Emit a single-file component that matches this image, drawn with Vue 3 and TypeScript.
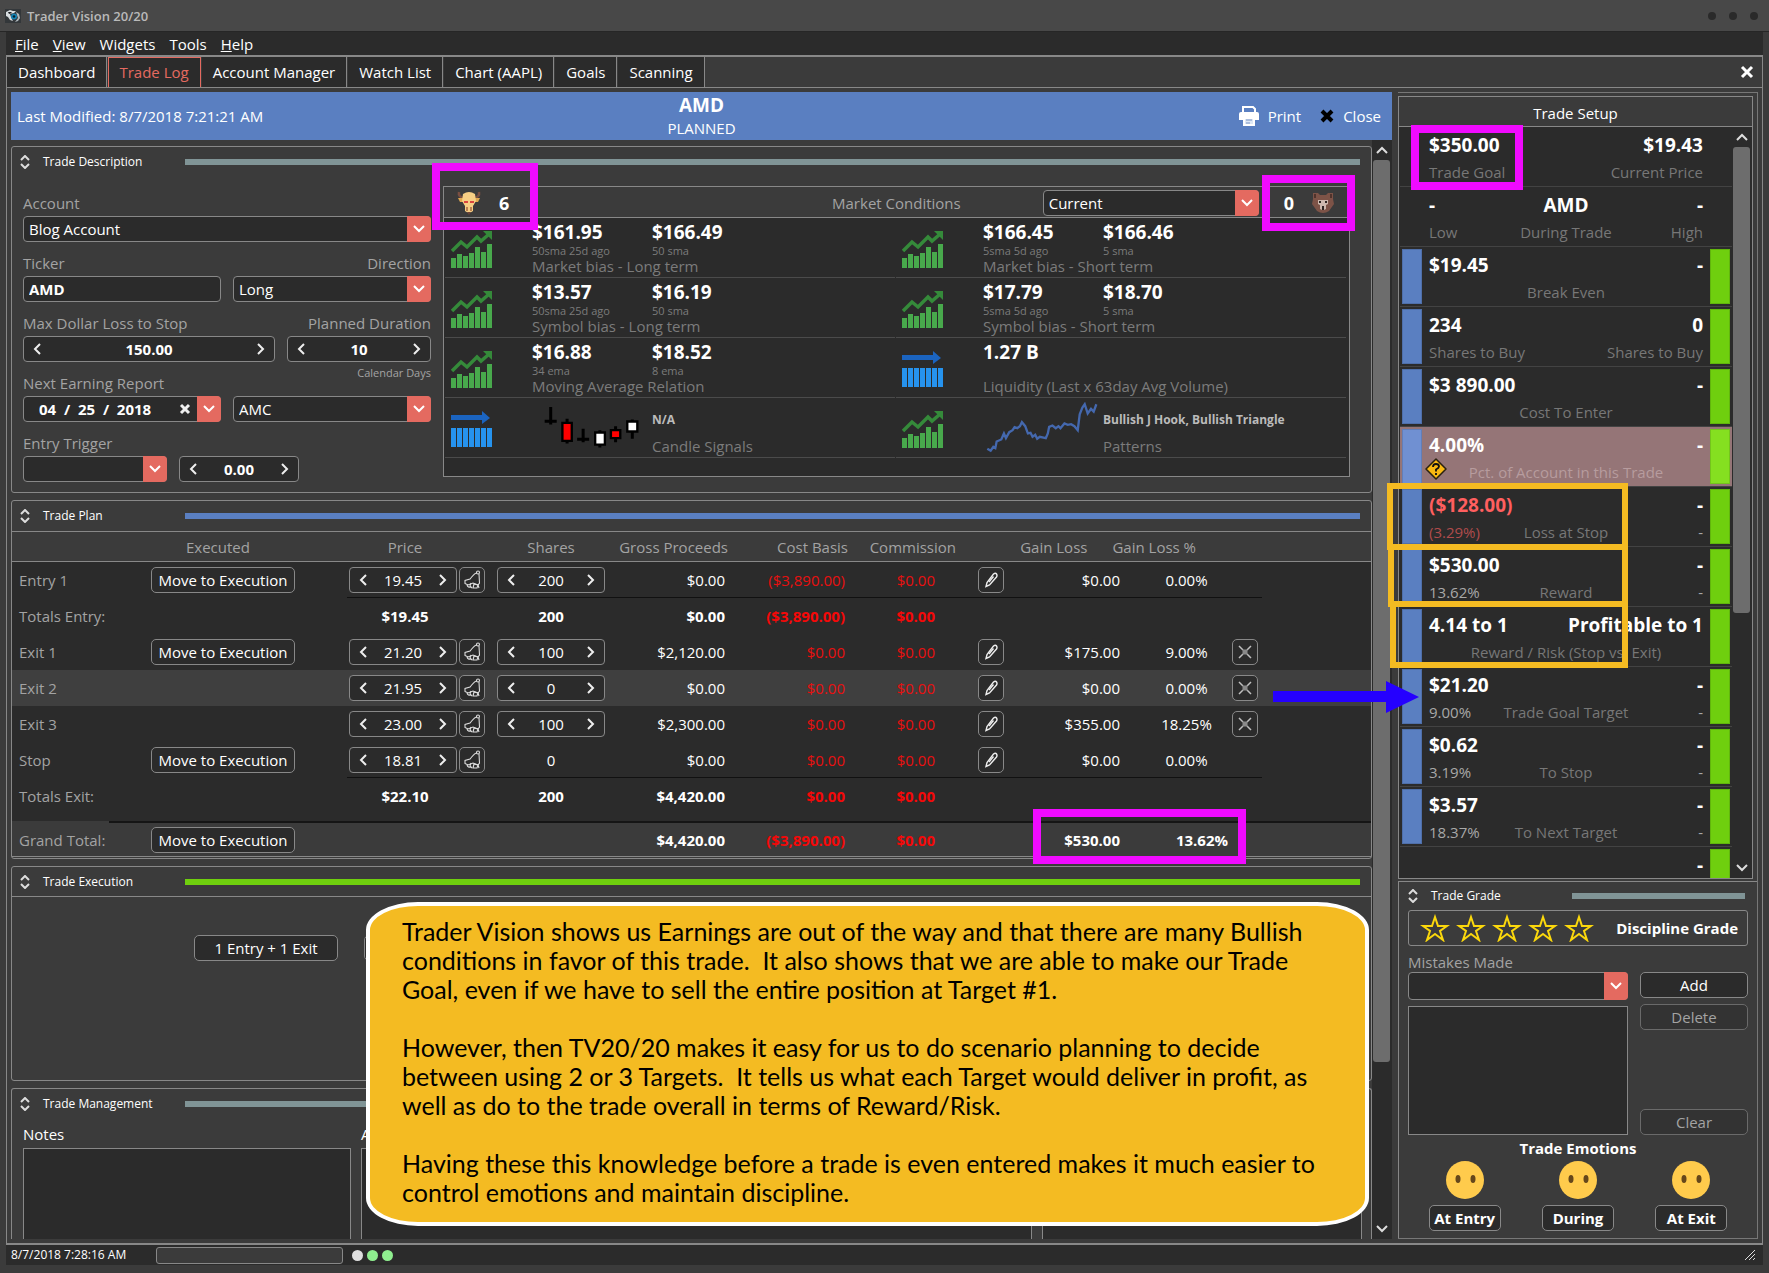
<script setup lang="ts">
interface Menu { hot: string; rest: string }
interface Condition {
  icon: 'up' | 'flat'
  v1: string
  s1: string
  v2: string
  s2: string
  label: string
  art?: 'candles' | 'pattern'
}
interface PlanRow {
  name: string
  kind: 'line' | 'total'
  move: boolean
  price: string
  shares: string
  sharesEdit: boolean
  gross: string
  cost: string
  fee: string
  gain: string
  pct: string
  removable: boolean
  shaded?: boolean
  ruled?: boolean
}
interface SetupRow {
  left: string
  right: string
  mid?: string
  subLeft?: string
  subMid?: string
  subRight?: string
  plain?: boolean
  dim?: boolean
  warn?: boolean
  loss?: boolean
  last?: boolean
}

const menus: Menu[] = [
  { hot: 'F', rest: 'ile' },
  { hot: 'V', rest: 'iew' },
  { hot: '', rest: 'Widgets' },
  { hot: '', rest: 'Tools' },
  { hot: 'H', rest: 'elp' },
]
const tabs = ['Dashboard', 'Trade Log', 'Account Manager', 'Watch List', 'Chart (AAPL)', 'Goals', 'Scanning']

const conditions: Condition[] = [
  { icon: 'up', v1: '$161.95', s1: '50sma 25d ago', v2: '$166.49', s2: '50 sma', label: 'Market bias - Long term' },
  { icon: 'up', v1: '$166.45', s1: '5sma 5d ago', v2: '$166.46', s2: '5 sma', label: 'Market bias - Short term' },
  { icon: 'up', v1: '$13.57', s1: '50sma 25d ago', v2: '$16.19', s2: '50 sma', label: 'Symbol bias - Long term' },
  { icon: 'up', v1: '$17.79', s1: '5sma 5d ago', v2: '$18.70', s2: '5 sma', label: 'Symbol bias - Short term' },
  { icon: 'up', v1: '$16.88', s1: '34 ema', v2: '$18.52', s2: '8 ema', label: 'Moving Average Relation' },
  { icon: 'flat', v1: '1.27 B', s1: '', v2: '', s2: '', label: 'Liquidity (Last x 63day Avg Volume)' },
  { icon: 'flat', v1: 'N/A', s1: '', v2: '', s2: '', label: 'Candle Signals', art: 'candles' },
  { icon: 'up', v1: 'Bullish J Hook, Bullish Triangle', s1: '', v2: '', s2: '', label: 'Patterns', art: 'pattern' },
]
const barHeights = [10, 14, 12, 15, 21, 16, 24]

const plan: PlanRow[] = [
  { name: 'Entry 1', kind: 'line', move: true, price: '19.45', shares: '200', sharesEdit: true, gross: '$0.00', cost: '($3,890.00)', fee: '$0.00', gain: '$0.00', pct: '0.00%', removable: false, ruled: true },
  { name: 'Totals Entry:', kind: 'total', move: false, price: '$19.45', shares: '200', sharesEdit: false, gross: '$0.00', cost: '($3,890.00)', fee: '$0.00', gain: '', pct: '', removable: false },
  { name: 'Exit 1', kind: 'line', move: true, price: '21.20', shares: '100', sharesEdit: true, gross: '$2,120.00', cost: '$0.00', fee: '$0.00', gain: '$175.00', pct: '9.00%', removable: true },
  { name: 'Exit 2', kind: 'line', move: false, price: '21.95', shares: '0', sharesEdit: true, gross: '$0.00', cost: '$0.00', fee: '$0.00', gain: '$0.00', pct: '0.00%', removable: true, shaded: true },
  { name: 'Exit 3', kind: 'line', move: false, price: '23.00', shares: '100', sharesEdit: true, gross: '$2,300.00', cost: '$0.00', fee: '$0.00', gain: '$355.00', pct: '18.25%', removable: true },
  { name: 'Stop', kind: 'line', move: true, price: '18.81', shares: '0', sharesEdit: false, gross: '$0.00', cost: '$0.00', fee: '$0.00', gain: '$0.00', pct: '0.00%', removable: false, ruled: true },
  { name: 'Totals Exit:', kind: 'total', move: false, price: '$22.10', shares: '200', sharesEdit: false, gross: '$4,420.00', cost: '$0.00', fee: '$0.00', gain: '', pct: '', removable: false },
]

const setup: SetupRow[] = [
  { left: '$350.00', right: '$19.43', subLeft: 'Trade Goal', subRight: 'Current Price', plain: true, dim: true },
  { left: '-', mid: 'AMD', right: '-', subLeft: 'Low', subMid: 'During Trade', subRight: 'High', plain: true, dim: true },
  { left: '$19.45', right: '-', subMid: 'Break Even' },
  { left: '234', right: '0', subLeft: 'Shares to Buy', subRight: 'Shares to Buy', dim: true },
  { left: '$3 890.00', right: '-', subMid: 'Cost To Enter' },
  { left: '4.00%', right: '-', subMid: 'Pct. of Account in this Trade', warn: true },
  { left: '($128.00)', right: '-', subLeft: '(3.29%)', subMid: 'Loss at Stop', subRight: '-', loss: true },
  { left: '$530.00', right: '-', subLeft: '13.62%', subMid: 'Reward', subRight: '-' },
  { left: '4.14 to 1', right: 'Profitable to 1', subMid: 'Reward / Risk (Stop vs. Exit)' },
  { left: '$21.20', right: '-', subLeft: '9.00%', subMid: 'Trade Goal Target', subRight: '-' },
  { left: '$0.62', right: '-', subLeft: '3.19%', subMid: 'To Stop', subRight: '-' },
  { left: '$3.57', right: '-', subLeft: '18.37%', subMid: 'To Next Target', subRight: '-' },
  { left: '', right: '-', last: true },
]
const emotions = ['At Entry', 'During', 'At Exit']

const noteLines = `Trader Vision shows us Earnings are out of the way and that there are many Bullish
conditions in favor of this trade.  It also shows that we are able to make our Trade
Goal, even if we have to sell the entire position at Target #1.

However, then TV20/20 makes it easy for us to do scenario planning to decide
between using 2 or 3 Targets.  It tells us what each Target would deliver in profit, as
well as do to the trade overall in terms of Reward/Risk.

Having these this knowledge before a trade is even entered makes it much easier to
control emotions and maintain discipline.`
</script>

<template>
  <div class="window">
    <header class="titlebar">
      <svg class="app-icon" width="16" height="14" viewBox="0 0 16 14">
        <rect width="16" height="14" fill="#33373a" />
        <path d="M1 3l4-2 3 1 3 0-2 2-4 1 1 3 2 4-3-1-2-3-2-1z" fill="#d8dde0" />
        <path d="M11 3l3 2 1 4-2 3-3 1 3-4z" fill="#aeb7bc" />
        <path d="M3 3l3 0 1 1-3 1z" fill="#1c1f22" />
        <circle cx="9" cy="7.500" r="3" fill="#1583b5" />
        <circle cx="9" cy="7.500" r="1.300" fill="#06212f" />
      </svg>
      <span class="app-name">Trader Vision 20/20</span>
      <span class="win-dots"><i></i><i></i><i></i></span>
    </header>

    <div class="body">
      <nav class="menubar">
        <a v-for="m in menus" :key="m.rest" href="#"><u>{{ m.hot }}</u>{{ m.rest }}</a>
      </nav>

      <div class="tabs">
        <button v-for="t in tabs" :key="t" class="tab" :class="{ active: t === 'Trade Log' }">{{ t }}</button>
        <button class="tabs-close" aria-label="Close tab">
          <svg width="14" height="14" viewBox="0 0 14 14"><path d="M2 2l10 10M12 2L2 12" stroke="#fff" stroke-width="3" /></svg>
        </button>
      </div>

      <div class="workspace">
        <main class="left">
          <div class="trade-head">
            <span class="modified">Last Modified: 8/7/2018 7:21:21 AM</span>
            <div class="trade-title">
              <strong>AMD</strong>
              <span>PLANNED</span>
            </div>
            <div class="trade-tools">
              <button>
                <svg width="20" height="20" viewBox="0 0 20 20">
                  <path d="M4 6V1h10l2 2v3" fill="none" stroke="#fff" stroke-width="2" />
                  <path d="M2 6h16q2 0 2 2v6h-4v-3H4v3H0V8q0-2 2-2z" fill="#fff" />
                  <path d="M5 12h10v7H5z" fill="#dfe8f5" stroke="#fff" stroke-width="2" />
                  <path d="M7 14h6M7 17h4" stroke="#7894c4" />
                </svg>
                Print
              </button>
              <button>
                <svg width="14" height="14" viewBox="0 0 14 14"><path d="M2 2l10 10M12 2L2 12" stroke="#000" stroke-width="4" /></svg>
                Close
              </button>
            </div>
          </div>

          <div class="scroller">
            <div class="panels">
              <section class="panel description">
                <div class="panel-head">
                  <svg class="updown" width="10" height="14" viewBox="0 0 10 14"><path d="M1 5l4-4 4 4M1 9l4 4 4-4" /></svg>
                  <h2>Trade Description</h2>
                  <i class="rule steel"></i>
                </div>
                <div class="desc-body">
                  <form class="fields">
                    <div class="field full">
                      <label for="account">Account</label>
                      <div class="select"><select id="account"><option>Blog Account</option></select><span class="drop"><svg width="12" height="8" viewBox="0 0 12 8"><path d="M1 1l5 5 5-5" /></svg></span></div>
                    </div>
                    <div class="pair">
                      <div class="field half">
                        <label for="ticker">Ticker</label>
                        <input id="ticker" class="text" value="AMD" />
                      </div>
                      <div class="field half end">
                        <label for="direction">Direction</label>
                        <div class="select"><select id="direction"><option>Long</option></select><span class="drop"><svg width="12" height="8" viewBox="0 0 12 8"><path d="M1 1l5 5 5-5" /></svg></span></div>
                      </div>
                    </div>
                    <div class="pair">
                      <div class="field wide">
                        <label for="maxloss">Max Dollar Loss to Stop</label>
                        <div class="spin strong">
                          <button type="button" aria-label="Less"><svg width="8" height="12" viewBox="0 0 8 12"><path d="M7 1L2 6l5 5" /></svg></button>
                          <input id="maxloss" value="150.00" />
                          <button type="button" aria-label="More"><svg width="8" height="12" viewBox="0 0 8 12"><path d="M1 1l5 5-5 5" /></svg></button>
                        </div>
                      </div>
                      <div class="field narrow end">
                        <label for="duration">Planned Duration</label>
                        <div class="spin strong">
                          <button type="button" aria-label="Less"><svg width="8" height="12" viewBox="0 0 8 12"><path d="M7 1L2 6l5 5" /></svg></button>
                          <input id="duration" value="10" />
                          <button type="button" aria-label="More"><svg width="8" height="12" viewBox="0 0 8 12"><path d="M1 1l5 5-5 5" /></svg></button>
                        </div>
                        <small>Calendar Days</small>
                      </div>
                    </div>
                    <div class="pair">
                      <div class="field half">
                        <label for="earning">Next Earning Report</label>
                        <div class="select date">
                          <input id="earning" value="04  /  25  /  2018" />
                          <svg class="clear" width="12" height="12" viewBox="0 0 12 12"><path d="M2 2l8 8M10 2l-8 8" /></svg>
                          <span class="drop"><svg width="12" height="8" viewBox="0 0 12 8"><path d="M1 1l5 5 5-5" /></svg></span>
                        </div>
                      </div>
                      <div class="field half push">
                        <div class="select"><select id="session" aria-label="Report session"><option>AMC</option></select><span class="drop"><svg width="12" height="8" viewBox="0 0 12 8"><path d="M1 1l5 5 5-5" /></svg></span></div>
                      </div>
                    </div>
                    <div class="pair bottom-pair">
                      <div class="field trigger">
                        <label for="trigger">Entry Trigger</label>
                        <div class="select"><select id="trigger"><option></option></select><span class="drop"><svg width="12" height="8" viewBox="0 0 12 8"><path d="M1 1l5 5 5-5" /></svg></span></div>
                      </div>
                      <div class="field amount push">
                        <div class="spin strong">
                          <button type="button" aria-label="Less"><svg width="8" height="12" viewBox="0 0 8 12"><path d="M7 1L2 6l5 5" /></svg></button>
                          <input aria-label="Trigger amount" value="0.00" />
                          <button type="button" aria-label="More"><svg width="8" height="12" viewBox="0 0 8 12"><path d="M1 1l5 5-5 5" /></svg></button>
                        </div>
                      </div>
                    </div>
                  </form>

                  <div class="market">
                    <div class="market-head">
                      <svg class="bull" width="24" height="24" viewBox="0 0 24 24">
                        <path d="M2 1Q1 6 7 7M22 1q1 5-5 6" fill="none" stroke="#7a4f42" stroke-width="2.500" />
                        <path d="M1 7l6 0-1 4-3 0zM23 7l-6 0 1 4 3 0z" fill="#e0a850" />
                        <path d="M6 3q6-4 12 0l1 7-3 5v5q-4 3-8 0v-5l-3-5z" fill="#f6ce84" />
                        <path d="M7 10h4v2H7zM13 10h4v2h-4z" fill="#d9453f" />
                        <path d="M10 16v4M14 16v4" stroke="#a8683f" stroke-width="1.500" />
                        <path d="M10 21l2 3 2-3z" fill="#6d4338" />
                      </svg>
                      <strong>6</strong>
                      <label for="conditions">Market Conditions</label>
                      <div class="select short"><select id="conditions"><option>Current</option></select><span class="drop"><svg width="12" height="8" viewBox="0 0 12 8"><path d="M1 1l5 5 5-5" /></svg></span></div>
                      <strong class="zero">0</strong>
                      <svg class="bear" width="22" height="20" viewBox="0 0 22 20">
                        <path d="M1 0h5l2 2h6l2-2h5v6l1 5-5 7q-6 4-12 0l-5-7 1-5z" fill="#7d5347" />
                        <path d="M2 1h2v4H2zM18 1h2v4h-2z" fill="#50332c" />
                        <path d="M6 7h10v4l-2 1v4l-2 1h-2l-2-1v-4l-2-1z" fill="#cdb8ae" />
                        <path d="M7 8h2v2H7zM13 8h2v2h-2zM10 13h2v4h-2z" fill="#2e2522" />
                      </svg>
                    </div>
                    <div class="market-grid">
                      <div v-for="c in conditions" :key="c.label" class="cond" :class="[{ arty: c.art }, c.art]">
                        <svg v-if="c.icon === 'up'" class="trend" width="41" height="37" viewBox="0 0 41 37">
                          <rect v-for="(h, i) in barHeights" :key="i" :x="i * 6" :y="37 - h" width="5" :height="h" fill="#48a94c" />
                          <path d="M1 20l9-9 6 5L26 6l4 4 7-6" fill="none" stroke="#358a3a" stroke-width="3.500" />
                          <path d="M32 0h9v9z" fill="#358a3a" />
                        </svg>
                        <svg v-else class="trend" width="41" height="37" viewBox="0 0 41 37">
                          <rect v-for="i in 7" :key="i" :x="i * 6 - 6" y="17" width="5" height="19" fill="#2693ee" />
                          <path d="M0 4h31V0l8 7-8 6V9H0z" fill="#1b64c0" />
                        </svg>
                        <svg v-if="c.art === 'candles'" class="art" width="97" height="43" viewBox="340 740 290 128">
                          <path d="M363 743v52M345 785h36M460 808v40M442 839h36M412 778v74M510 812v52M557 800v48M607 780v58" stroke="#000" stroke-width="9" />
                          <path d="M398 790h28v54h-28zM543 812h28v24h-28z" fill="#f00" stroke="#000" stroke-width="7" />
                          <path d="M496 819h29v36h-29zM592 786h30v30h-30z" fill="#fff" stroke="#000" stroke-width="7" />
                        </svg>
                        <svg v-if="c.art === 'pattern'" class="art" width="113" height="51" viewBox="320 728 340 152">
                          <polyline fill="none" stroke="#4468ae" stroke-width="7" points="324,868 334,874 342,862 348,866 352,846 366,840 374,822 380,836 390,818 400,812 406,803 414,806 422,800 428,788 438,800 446,822 454,820 460,832 468,826 474,838 482,832 500,836 506,822 510,802 520,798 530,806 538,800 544,806 556,792 566,796 576,794 586,800 596,812 602,764 610,744 617,734 626,762 636,748 644,756 652,734" />
                        </svg>
                        <div class="cond-text">
                          <div class="cond-row">
                            <b>{{ c.v1 }}</b><b>{{ c.v2 }}</b>
                          </div>
                          <div class="cond-row sub">
                            <span>{{ c.s1 }}</span><span>{{ c.s2 }}</span>
                          </div>
                          <div class="cond-label">{{ c.label }}</div>
                        </div>
                      </div>
                    </div>
                    <i class="mark pink mark-bull"></i>
                    <i class="mark pink mark-bear"></i>
                  </div>
                </div>
              </section>

              <section class="panel plan">
                <div class="panel-head">
                  <svg class="updown" width="10" height="14" viewBox="0 0 10 14"><path d="M1 5l4-4 4 4M1 9l4 4 4-4" /></svg>
                  <h2>Trade Plan</h2>
                  <i class="rule blue"></i>
                </div>
                <table>
                  <colgroup>
                    <col class="w1" /><col class="w2" /><col class="w3" /><col class="w4" /><col class="w5" /><col class="w6" />
                    <col class="w7" /><col class="w8" /><col class="w9" /><col class="w10" /><col class="w11" /><col />
                  </colgroup>
                  <thead>
                    <tr>
                      <th></th>
                      <th class="h-exec">Executed</th>
                      <th class="c3">Price</th>
                      <th class="c4">Shares</th>
                      <th class="money">Gross Proceeds</th>
                      <th class="money">Cost Basis</th>
                      <th class="h-fee">Commission</th>
                      <th></th>
                      <th colspan="2" class="h-gain"><span>Gain Loss</span><span>Gain Loss %</span></th>
                      <th></th>
                      <th></th>
                    </tr>
                  </thead>
                  <tbody>
                    <tr v-for="r in plan" :key="r.name" :class="[r.kind, { shaded: r.shaded, ruled: r.ruled }]">
                      <td class="c1">{{ r.name }}</td>
                      <td class="c2"><button v-if="r.move" class="btn">Move to Execution</button></td>
                      <td class="c3" :class="{ edit: r.kind === 'line' }">
                        <div v-if="r.kind === 'line'" class="price-cell">
                          <div class="spin">
                            <button aria-label="Less"><svg width="8" height="12" viewBox="0 0 8 12"><path d="M7 1L2 6l5 5" /></svg></button>
                            <input :aria-label="r.name + ' price'" :value="r.price" />
                            <button aria-label="More"><svg width="8" height="12" viewBox="0 0 8 12"><path d="M1 1l5 5-5 5" /></svg></button>
                          </div>
                          <button class="icon-btn" aria-label="Alert">
                            <svg width="18" height="20" viewBox="0 0 18 20" fill="none" stroke="#ddd" stroke-width="1.100">
                              <circle cx="15" cy="2.500" r="1.500" />
                              <path d="M14 3c-3 0-5 4-7 6l-5 1.500 0 3 3 1.500 5-2 5 2 1.500-2L16 4" />
                              <path d="M4 15q1 3 4 2M8 13l-1 3 2 2M11 14l-1 4h4l1-3zM15 15l1 3" />
                            </svg>
                          </button>
                        </div>
                        <template v-else>{{ r.price }}</template>
                      </td>
                      <td class="c4">
                        <div v-if="r.sharesEdit" class="spin">
                          <button aria-label="Less"><svg width="8" height="12" viewBox="0 0 8 12"><path d="M7 1L2 6l5 5" /></svg></button>
                          <input :aria-label="r.name + ' shares'" :value="r.shares" />
                          <button aria-label="More"><svg width="8" height="12" viewBox="0 0 8 12"><path d="M1 1l5 5-5 5" /></svg></button>
                        </div>
                        <template v-else>{{ r.shares }}</template>
                      </td>
                      <td class="money">{{ r.gross }}</td>
                      <td class="money red">{{ r.cost }}</td>
                      <td class="fee red">{{ r.fee }}</td>
                      <td class="c8">
                        <button v-if="r.kind === 'line'" class="icon-btn" aria-label="Edit">
                          <svg width="14" height="16" viewBox="0 0 14 16" fill="none" stroke="#eee" stroke-width="1.400">
                            <path d="M9.500 2q2-1.500 3 0t0 3L5.500 13l-3.500 1.500L3 10.500z" /><path d="M9.500 4.500L5 10" />
                          </svg>
                        </button>
                      </td>
                      <td class="money">{{ r.gain }}</td>
                      <td class="pct">{{ r.pct }}</td>
                      <td class="c11">
                        <button v-if="r.removable" class="icon-btn" aria-label="Remove">
                          <svg width="14" height="14" viewBox="0 0 14 14" stroke="#c0c0c0" stroke-width="1.500">
                            <path d="M1 1l4 4M13 1L9 5M1 13l4-4M13 13L9 9" /><path d="M4.500 4.500h5v5h-5z" fill="#8a8a8a" stroke="none" />
                          </svg>
                        </button>
                      </td>
                      <td class="tail"></td>
                    </tr>
                  </tbody>
                  <tfoot>
                    <tr class="total">
                      <td class="c1">Grand Total:</td>
                      <td class="c2"><button class="btn">Move to Execution</button></td>
                      <td></td>
                      <td></td>
                      <td class="money">$4,420.00</td>
                      <td class="money red">($3,890.00)</td>
                      <td class="fee red">$0.00</td>
                      <td></td>
                      <td class="money">$530.00</td>
                      <td class="pct-end">13.62%</td>
                      <td></td>
                      <td></td>
                    </tr>
                  </tfoot>
                </table>
                <i class="mark pink mark-total"></i>
              </section>

              <section class="panel execution">
                <div class="panel-head lined">
                  <svg class="updown" width="10" height="14" viewBox="0 0 10 14"><path d="M1 5l4-4 4 4M1 9l4 4 4-4" /></svg>
                  <h2>Trade Execution</h2>
                  <i class="rule green"></i>
                </div>
                <div class="exec-body">
                  <button class="btn">1 Entry + 1 Exit</button>
                  <button class="btn" aria-label="More exits"></button>
                </div>
              </section>

              <section class="panel management">
                <div class="panel-head">
                  <svg class="updown" width="10" height="14" viewBox="0 0 10 14"><path d="M1 5l4-4 4 4M1 9l4 4 4-4" /></svg>
                  <h2>Trade Management</h2>
                  <i class="rule steel"></i>
                </div>
                <div class="notes">
                  <div><label for="notes">Notes</label><textarea id="notes"></textarea></div>
                  <div><label for="actions">A</label><textarea id="actions"></textarea></div>
                  <div><label for="review">&nbsp;</label><textarea id="review"></textarea></div>
                </div>
              </section>
            </div>

            <div class="scrollbar">
              <svg width="12" height="8" viewBox="0 0 12 8"><path d="M1 7l5-5 5 5" /></svg>
              <i class="thumb tall"></i>
              <svg class="down" width="12" height="8" viewBox="0 0 12 8"><path d="M1 1l5 5 5-5" /></svg>
            </div>
          </div>

          <aside class="callout">{{ noteLines }}</aside>
        </main>

        <aside class="right">
          <section class="setup">
            <h3>Trade Setup</h3>
            <div class="setup-body">
              <div class="setup-list">
                <div v-for="(s, i) in setup" :key="i" class="srow" :class="{ warn: s.warn, loss: s.loss, last: s.last }">
                  <i class="edge blue" :class="{ off: s.plain || s.last }"></i>
                  <div class="scell">
                    <div class="sline top"><b>{{ s.left }}</b><b>{{ s.mid }}</b><b>{{ s.right }}</b></div>
                    <div v-if="!s.last" class="sline" :class="{ dim: s.dim }">
                      <span>{{ s.subLeft }}</span><em>{{ s.subMid }}</em><span>{{ s.subRight }}</span>
                    </div>
                    <svg v-if="s.warn" class="sign" width="22" height="22" viewBox="0 0 22 22">
                      <path d="M11 1l10 10-10 10L1 11z" fill="#f9b812" stroke="#2a2210" stroke-width="1.500" stroke-linejoin="round" />
                      <path d="M8 9q0-3 3-3t3 2.500q0 1.500-3 3v2M11 15v2" fill="none" stroke="#111" stroke-width="1.800" />
                    </svg>
                  </div>
                  <i class="edge green" :class="{ off: s.plain }"></i>
                </div>
              </div>
              <div class="scrollbar">
                <svg width="12" height="8" viewBox="0 0 12 8"><path d="M1 7l5-5 5 5" /></svg>
                <i class="thumb mid"></i>
                <svg class="down" width="12" height="8" viewBox="0 0 12 8"><path d="M1 1l5 5 5-5" /></svg>
              </div>
            </div>
          </section>

          <section class="grade">
            <div class="panel-head">
              <svg class="updown" width="10" height="14" viewBox="0 0 10 14"><path d="M1 5l4-4 4 4M1 9l4 4 4-4" /></svg>
              <h2>Trade Grade</h2>
              <i class="rule steel"></i>
            </div>
            <div class="stars">
              <svg v-for="i in 5" :key="i" width="30" height="28" viewBox="0 0 30 28">
                <path d="M15 3l3 9h9l-7 5 3 9-8-6-8 6 3-9-7-5h9z" fill="none" stroke="#fbd80c" stroke-width="2" />
              </svg>
              <strong>Discipline Grade</strong>
            </div>
            <label for="mistakes">Mistakes Made</label>
            <div class="mistakes">
              <div class="mcol">
                <div class="select tallsel"><select id="mistakes"><option></option></select><span class="drop"><svg width="12" height="8" viewBox="0 0 12 8"><path d="M1 1l5 5 5-5" /></svg></span></div>
                <textarea aria-label="Mistake list"></textarea>
              </div>
              <div class="mbtns">
                <button class="btn">Add</button>
                <button class="btn" disabled>Delete</button>
                <button class="btn bottom" disabled>Clear</button>
              </div>
            </div>
            <h4>Trade Emotions</h4>
            <div class="emotions">
              <div v-for="e in emotions" :key="e">
                <svg width="38" height="38" viewBox="0 0 38 38">
                  <circle cx="19" cy="19" r="19" fill="#ffcb4c" />
                  <ellipse cx="12" cy="18" rx="2.500" ry="4" fill="#65471b" />
                  <ellipse cx="27" cy="18" rx="2.500" ry="4" fill="#65471b" />
                </svg>
                <button class="btn">{{ e }}</button>
              </div>
            </div>
          </section>

          <i class="mark pink mark-goal"></i>
          <i class="mark gold mark-loss"></i>
          <i class="mark gold mark-reward"></i>
          <i class="mark gold mark-ratio"></i>
          <svg class="pointer" width="146" height="34" viewBox="0 0 146 34">
            <path d="M0 11h113V1l33 16-33 16V22H0z" fill="#2500ff" />
          </svg>
        </aside>
      </div>

      <footer class="status">
        <span class="clock">8/7/2018 7:28:16 AM</span>
        <span class="progress"></span>
        <i class="led"></i><i class="led on"></i><i class="led on"></i>
        <svg class="grip" width="10" height="10" viewBox="0 0 10 10"><path d="M0 10L10 0M4 10l6-6M8 10l2-2" stroke="#ddd" /></svg>
      </footer>
    </div>
  </div>
</template>

<style>
html,
body {
  margin: 0;
  background: #3b3b3b;
}
</style>

<style scoped>
.window,
.window * {
  box-sizing: border-box;
}
.window {
  display: flex;
  flex-direction: column;
  min-height: 100vh;
  background: #3b3b3b;
  color: #fff;
  font: 15px/20px "Open Sans", "Noto Sans", sans-serif;
  overflow: hidden;
}
button,
input,
select,
textarea {
  font: inherit;
  color: inherit;
  margin: 0;
  padding: 0;
}
button {
  border: 0;
  background: none;
  white-space: nowrap;
}
svg {
  display: block;
  flex: none;
}
h2,
h3,
h4 {
  margin: 0;
  font-size: 15px;
  font-weight: 400;
}
i {
  font-style: normal;
}

/* title bar */
.titlebar {
  display: flex;
  align-items: center;
  height: 32px;
  padding: 0 11px 0 5px;
  background: #484848;
  border-bottom: 1px solid #262626;
}
.app-name {
  margin-left: 6px;
  font-size: 13px;
  font-weight: 600;
  color: #bababa;
}
.win-dots {
  display: flex;
  gap: 13px;
  margin-left: auto;
}
.win-dots i {
  width: 8px;
  height: 8px;
  border-radius: 50%;
  background: #2a2a2a;
}

.body {
  display: flex;
  flex: 1;
  flex-direction: column;
  padding: 0 6px 8px;
}
.menubar {
  display: flex;
  gap: 14px;
  height: 23px;
  padding: 2px 9px 0;
  background: #2b2b2b;
}
.menubar a {
  color: #fff;
  text-decoration: none;
}
.tabs {
  display: flex;
  gap: 1px;
  height: 33px;
  border: 1px solid #888;
  border-top-width: 2px;
}
.tab {
  padding: 0 11px;
  background: #2b2b2b;
  border-right: 1px solid #888;
}
.tab.active {
  color: #e46a60;
  border-right-color: #e46a60;
  box-shadow: inset 1px 1px #e46a60;
}
.tabs-close {
  margin-left: auto;
  padding: 0 8px;
}

.workspace {
  display: flex;
  flex: 1;
  gap: 6px;
  padding: 4px;
  border: 1px solid #888;
  border-top: 0;
  border-bottom-width: 2px;
}
.left {
  position: relative;
  display: flex;
  flex: 1;
  flex-direction: column;
  min-width: 0;
}
.trade-head {
  display: grid;
  grid-template-columns: 1fr auto 1fr;
  align-items: center;
  height: 48px;
  background: #5a7fc1;
}
.modified {
  padding-left: 6px;
}
.trade-title {
  display: flex;
  flex-direction: column;
  align-items: center;
}
.trade-title strong {
  font-size: 19px;
  line-height: 24px;
}
.trade-title span {
  line-height: 22px;
}
.trade-tools {
  display: flex;
  justify-content: flex-end;
  gap: 19px;
  padding-right: 11px;
}
.trade-tools button {
  display: flex;
  align-items: center;
  gap: 9px;
}

.scroller {
  display: flex;
  flex: 1;
}
.panels {
  display: flex;
  flex: 1;
  flex-direction: column;
  gap: 7px;
  min-width: 0;
  padding-top: 6px;
}
.panel {
  position: relative;
  border: 1px solid #888;
  border-radius: 3px;
}
.panel-head {
  display: flex;
  align-items: center;
  height: 30px;
  padding: 0 11px 0 8px;
}
.panel-head h2 {
  width: 155px;
  padding-left: 13px;
  font-size: 12px;
  line-height: 18px;
  white-space: nowrap;
}
.updown path,
.scrollbar path {
  fill: none;
  stroke: #ddd;
  stroke-width: 2;
}
.rule {
  flex: 1;
  height: 6px;
}
.steel {
  background: #809496;
}
.blue {
  background: #5a7fc1;
}
.green {
  background: #6fcf0e;
}

/* trade description */
.desc-body {
  display: flex;
  gap: 12px;
  padding: 9px 21px 8px 11px;
}
.fields {
  display: flex;
  flex-direction: column;
  width: 408px;
  padding-top: 8px;
}
.pair {
  display: flex;
  gap: 12px;
}
.field {
  position: relative;
  height: 60px;
}
.bottom-pair .field {
  height: 50px;
}
.field label,
.grade label {
  display: block;
  height: 22px;
  line-height: 18px;
  color: #a3a3a3;
  white-space: nowrap;
}
.half {
  width: 198px;
}
.wide {
  width: 252px;
}
.narrow {
  width: 144px;
}
.trigger {
  width: 144px;
}
.amount {
  width: 120px;
}
.push {
  padding-top: 22px;
}
.end label,
.end small {
  text-align: right;
}
.end small {
  display: block;
  font-size: 11px;
  line-height: 22px;
  color: #a3a3a3;
}
.select {
  position: relative;
  height: 26px;
}
.select select,
.text,
.select.date {
  width: 100%;
  height: 26px;
  padding: 0 5px;
  color: #fff;
  background: #2b2b2b;
  border: 1px solid #888;
  border-radius: 4px;
  appearance: none;
}
.text {
  font-weight: 700;
}
.select.date {
  display: flex;
  align-items: center;
  padding: 0 29px 0 15px;
}
.date input {
  flex: 1;
  min-width: 0;
  font-weight: 700;
  white-space: pre;
  background: none;
  border: 0;
}
.clear path {
  stroke: #eee;
  stroke-width: 3;
}
.drop {
  position: absolute;
  top: 0;
  right: 0;
  bottom: 0;
  display: flex;
  align-items: center;
  justify-content: center;
  width: 24px;
  background: #e46a60;
  border-radius: 0 4px 4px 0;
  pointer-events: none;
}
.date .drop {
  top: -1px;
  right: -1px;
  bottom: -1px;
}
.drop path {
  fill: none;
  stroke: #fff;
  stroke-width: 2;
}
.spin {
  display: flex;
  align-items: center;
  height: 26px;
  background: #2b2b2b;
  border: 1px solid #888;
  border-radius: 4px;
}
.spin input {
  flex: 1;
  width: 0;
  min-width: 0;
  text-align: center;
  background: none;
  border: 0;
}
.spin button {
  padding: 0 9px;
}
.spin path {
  fill: none;
  stroke: #eee;
  stroke-width: 2;
}
.strong input {
  font-weight: 700;
}

/* market conditions */
.market {
  position: relative;
  flex: 1;
  height: 291px;
  background: #2b2b2b;
  border: 1px solid #888;
}
.market-head {
  display: flex;
  align-items: center;
  height: 31px;
  padding: 2px 15px 0 13px;
  background: #3b3b3b;
  border-bottom: 1px solid #888;
}
.market-head strong {
  margin-left: 18px;
  font-size: 18px;
}
.market-head label {
  margin-left: auto;
  color: #a3a3a3;
}
.market-head .short {
  width: 216px;
  margin-left: 82px;
}
.market-head .zero {
  margin: 0 18px 0 25px;
}
.market-grid {
  display: grid;
  grid-template-columns: 1fr 1fr;
  gap: 0 1px;
  padding: 0 3px 0 1px;
}
.cond {
  position: relative;
  display: flex;
  height: 60px;
  border-bottom: 1px solid #4b4b4b;
}
.trend {
  margin: 13px 40px 0 6px;
}
.cond-text {
  flex: 1;
  padding-top: 3px;
  white-space: nowrap;
}
.cond-row {
  display: grid;
  grid-template-columns: 120px 1fr;
  height: 22px;
  font-size: 19px;
  line-height: 23px;
}
.cond-row.sub {
  height: 16px;
  font-size: 11px;
  line-height: 15px;
  color: #7b7b7b;
}
.cond-label {
  line-height: 15px;
  color: #7b7b7b;
}
.art {
  position: absolute;
  left: 98px;
  top: 8px;
}
.pattern .art {
  left: 90px;
  top: 4px;
}
.arty .cond-text {
  padding-left: 120px;
}
.arty .cond-row {
  display: block;
  font-size: 12px;
  line-height: 38px;
  color: #bbb;
}

/* trade plan */
.plan {
  padding-bottom: 1px;
}
table {
  width: 100%;
  table-layout: fixed;
  border-collapse: separate;
  border-spacing: 0;
  background: #2b2b2b;
  border-top: 1px solid #888;
  border-bottom: 1px solid #888;
}
.w1 { width: 134px; }
.w2 { width: 201px; }
.w3 { width: 144px; }
.w4 { width: 124px; }
.w5 { width: 115px; }
.w6 { width: 120px; }
.w7 { width: 118px; }
.w8 { width: 50px; }
.w9 { width: 107px; }
.w10 { width: 103px; }
.w11 { width: 34px; }
th,
td {
  height: 36px;
  padding: 0;
  white-space: nowrap;
  vertical-align: middle;
}
th {
  height: 30px;
  font-weight: 400;
  color: #a3a3a3;
  background: #3b3b3b;
  border-bottom: 1px solid #888;
}
th.h-exec {
  padding-left: 40px;
  text-align: left;
}
th.money {
  padding-right: 2px;
}
th.h-fee {
  padding-right: 12px;
  text-align: right;
}
th.h-gain {
  padding-right: 32px;
  text-align: right;
}
.h-gain span + span {
  margin-left: 25px;
}
.c1 {
  padding-left: 7px;
  color: #a3a3a3;
}
.c2 {
  padding-left: 5px;
}
.c2 .btn {
  width: 144px;
}
.c3 {
  padding-right: 28px;
  text-align: center;
}
.c3.edit {
  padding: 0 4px 0 2px;
}
.price-cell {
  display: flex;
  gap: 2px;
}
.price-cell .spin {
  width: 108px;
}
.c4 {
  padding: 0 10px 0 6px;
  text-align: center;
}
.money {
  padding-right: 5px;
  text-align: right;
}
.fee {
  padding-right: 33px;
  text-align: right;
}
.red {
  color: #e80f0f;
}
.c8 {
  padding-left: 10px;
}
.pct {
  padding-left: 20px;
  text-align: center;
}
.pct-end {
  text-align: right;
}
.c11 {
  padding-left: 4px;
}
.total td:not(.c1):not(.c2) {
  font-weight: 700;
}
.total .red {
  color: #f50808;
}
.shaded td {
  background: #3f3f3f;
}
.ruled td:not(.c1):not(.c2):not(.tail) {
  border-bottom: 1px solid #111;
}
tbody tr:last-child td {
  height: 43px;
  padding-bottom: 7px;
}
tfoot td {
  height: 35px;
  background: #3b3b3b;
  border-top: 2px solid #151515;
}
tfoot td.c1 {
  background: linear-gradient(#151515, #151515) right top / 37px 2px no-repeat #3b3b3b;
  background-origin: border-box;
  border-top-color: transparent;
}
.btn {
  height: 26px;
  line-height: 22px;
  text-align: center;
  background: #2b2b2b;
  border: 1px solid #888;
  border-radius: 5px;
}
.btn:disabled {
  color: #a3a3a3;
  background: #333;
  border-color: #6a6a6a;
}
.icon-btn {
  display: flex;
  align-items: center;
  justify-content: center;
  width: 26px;
  height: 26px;
  background: #2b2b2b;
  border: 1px solid #888;
  border-radius: 5px;
}

/* execution and management */
.lined {
  border-bottom: 1px solid #888;
}
.exec-body {
  display: flex;
  gap: 26px;
  height: 183px;
  padding: 38px 0 0 182px;
}
.exec-body .btn {
  width: 144px;
}
.management {
  display: flex;
  flex: 1;
  flex-direction: column;
  border-bottom: 0;
  border-radius: 3px 3px 0 0;
}
.notes {
  display: grid;
  flex: 1;
  grid-template-columns: 328px 1fr 320px;
  gap: 10px;
  padding: 5px 9px 0 11px;
}
.notes > div {
  display: flex;
  flex-direction: column;
}
.notes label {
  height: 24px;
}
.notes textarea {
  flex: 1;
  min-height: 60px;
  background: #2b2b2b;
  border: 1px solid #888;
  border-bottom: 0;
  border-radius: 0;
  resize: none;
}

.scrollbar {
  display: flex;
  flex-direction: column;
  align-items: center;
  width: 20px;
  padding: 6px 1px 6px 0;
  background: #2b2b2b;
}
.thumb {
  width: 17px;
  margin-top: 6px;
  background: #6d6d6d;
  border-radius: 3px;
}
.tall {
  height: 83%;
}
.mid {
  height: 466px;
}
.down {
  margin-top: auto;
}

.callout {
  position: absolute;
  left: 355px;
  right: 23px;
  bottom: 13px;
  height: 324px;
  padding: 11px 0 0 32px;
  font: 25px/29px Lato, "Open Sans", sans-serif;
  color: #000;
  white-space: pre;
  background: #f4bb22;
  border: 4px solid #fff;
  border-radius: 52px / 28px;
}

/* right column */
.right {
  position: relative;
  display: flex;
  flex-direction: column;
  width: 360px;
  border: 1px solid #777;
  border-left: 0;
}
.setup {
  margin: 3px 4px 2px 0;
  background: #2b2b2b;
  border: 1px solid #888;
}
.setup h3 {
  height: 30px;
  line-height: 32px;
  text-align: center;
  background: #3b3b3b;
  border-bottom: 1px solid #888;
}
.setup-body {
  display: flex;
  height: 751px;
}
.setup-list {
  flex: 1;
  padding-left: 1px;
  overflow: hidden;
}
.srow {
  display: flex;
  height: 60px;
  padding: 2px;
  border-bottom: 1px solid #434343;
}
.edge {
  width: 20px;
  border: 1px solid rgba(0, 0, 0, 0.12);
}
.edge.off {
  visibility: hidden;
}
.scell {
  position: relative;
  flex: 1;
  padding: 3px 7px 0;
}
.sline {
  display: grid;
  grid-template-columns: 1fr auto 1fr;
  line-height: 22px;
  color: #a8a8a8;
  white-space: nowrap;
}
.sline.top {
  height: 29px;
  font-size: 19px;
  line-height: 26px;
  color: #fff;
}
.sline > :last-child {
  text-align: right;
}
.sline em {
  font-style: normal;
  color: #777;
}
.sline.dim {
  color: #777;
}
.srow.last {
  border-bottom: 0;
}
.warn {
  background: #957577;
}
.warn .sline em {
  color: #b79c9e;
}
.warn .blue {
  background: #7090d2;
}
.warn .green {
  background: #85e020;
}
.loss .top b:first-child {
  color: #ff5f5f;
}
.loss span:first-child {
  color: #b04c4c;
}
.sign {
  position: absolute;
  left: 3px;
  bottom: 4px;
}

.grade {
  flex: 1;
  padding: 0 9px 6px 9px;
  border: 1px solid #888;
  border-right: 0;
  border-bottom: 0;
}
.grade .panel-head {
  height: 28px;
  padding: 0 3px 0 0;
}
.grade .panel-head h2 {
  width: 154px;
}
.stars {
  display: flex;
  align-items: center;
  gap: 6px;
  height: 36px;
  padding: 0 9px 0 11px;
  border: 1px solid #888;
  border-radius: 3px;
}
.stars strong {
  margin-left: auto;
}
.grade label {
  height: 26px;
  padding-top: 7px;
}
.mistakes {
  display: flex;
  gap: 12px;
  height: 163px;
}
.mcol {
  display: flex;
  flex: 1;
  flex-direction: column;
  gap: 6px;
}
.tallsel,
.tallsel select {
  height: 28px;
}
.mcol textarea {
  flex: 1;
  background: #2b2b2b;
  border: 1px solid #888;
  border-radius: 0;
  resize: none;
}
.mbtns {
  display: flex;
  flex-direction: column;
  gap: 6px;
  width: 108px;
}
.bottom {
  margin-top: auto;
}
.grade h4 {
  line-height: 26px;
  font-weight: 700;
  text-align: center;
}
.emotions {
  display: flex;
  justify-content: space-around;
}
.emotions div {
  display: flex;
  flex-direction: column;
  align-items: center;
  gap: 6px;
}
.emotions .btn {
  width: 72px;
  font-weight: 700;
}

/* annotations laid over the window */
.mark {
  position: absolute;
  pointer-events: none;
}
.pink {
  border: 8px solid #f00aff;
}
.gold {
  border: 6px solid #f4bb22;
}
.mark-bull {
  left: -12px;
  top: -24px;
  width: 106px;
  height: 67px;
}
.mark-bear {
  right: -6px;
  top: -12px;
  width: 93px;
  height: 56px;
}
.mark-total {
  left: 1021px;
  bottom: -6px;
  width: 213px;
  height: 55px;
}
.mark-goal {
  left: 13px;
  top: 32px;
  width: 112px;
  height: 65px;
}
.mark-loss {
  left: -11px;
  top: 390px;
  width: 241px;
  height: 67px;
}
.mark-reward {
  left: -10px;
  top: 451px;
  width: 240px;
  height: 63px;
}
.mark-ratio {
  left: -8px;
  top: 508px;
  width: 238px;
  height: 67px;
}
.pointer {
  position: absolute;
  left: -125px;
  top: 587px;
}

.status {
  display: flex;
  align-items: center;
  height: 20px;
  padding: 0 8px 0 5px;
  background: #2b2b2b;
}
.clock {
  width: 145px;
  font-size: 12px;
}
.progress {
  width: 187px;
  height: 17px;
  margin-right: 9px;
  background: #3b3b3b;
  border: 1px solid #888;
  border-radius: 3px;
}
.led {
  width: 11px;
  height: 11px;
  margin-right: 4px;
  background: #dedede;
  border-radius: 50%;
}
.led.on {
  background: #8fee8f;
}
.grip {
  margin-left: auto;
}
</style>
